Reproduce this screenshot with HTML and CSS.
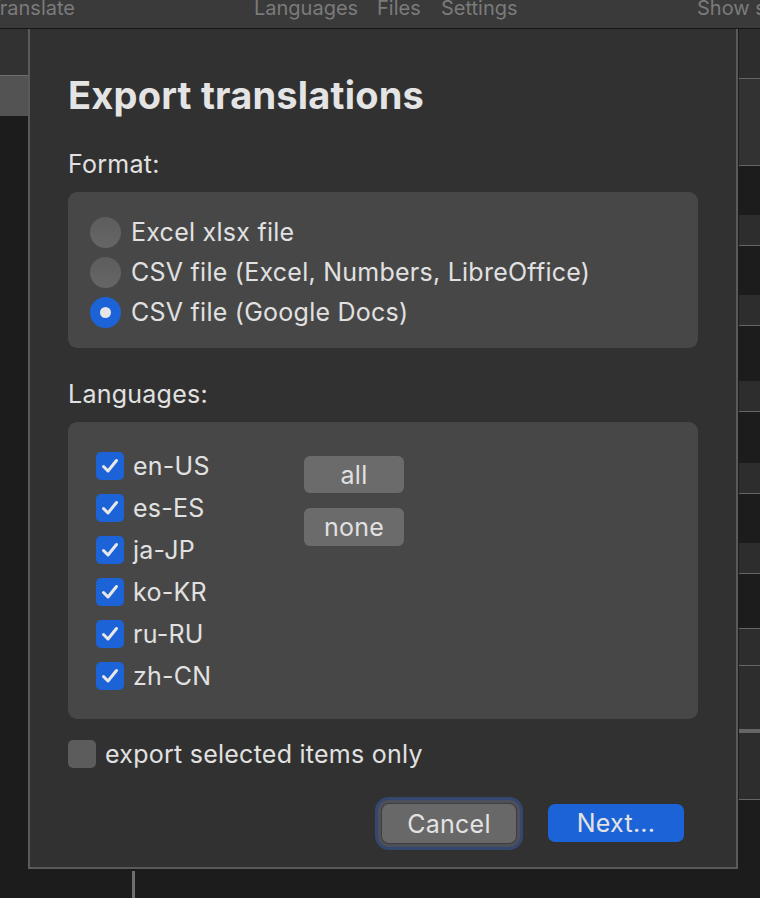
FILE: index.html
```html
<!DOCTYPE html>
<html>
<head>
<meta charset="utf-8">
<link rel="stylesheet" href="styles.css">
</head>
<body>
<div class="topbar">
  <span class="tb-item tb-first">Translate</span>
  <span class="tb-item tb-lang">Languages</span>
  <span class="tb-item tb-files">Files</span>
  <span class="tb-item tb-settings">Settings</span>
  <span class="tb-item tb-show">Show sidebar</span>
</div>
<div class="main">
  <div class="side-left">
    <div class="sl-a"></div>
    <div class="sl-b"></div>
  </div>
  <div class="dialog">
    <h1 class="title">Export translations</h1>
    <div class="label">Format:</div>
    <div class="group radios">
      <div class="radio-row"><span class="radio"></span><span class="opt">Excel xlsx file</span></div>
      <div class="radio-row"><span class="radio"></span><span class="opt">CSV file (Excel, Numbers, LibreOffice)</span></div>
      <div class="radio-row"><span class="radio on"><span class="radio-dot"></span></span><span class="opt">CSV file (Google Docs)</span></div>
    </div>
    <div class="label label-lang">Languages:</div>
    <div class="group langs">
      <div class="lang-list">
        <div class="check-row"><span class="check on"><svg viewBox="0 0 28 28"><path d="M7.5 14.5 L12 19 L20.5 8.5"/></svg></span><span class="opt">en-US</span></div>
        <div class="check-row"><span class="check on"><svg viewBox="0 0 28 28"><path d="M7.5 14.5 L12 19 L20.5 8.5"/></svg></span><span class="opt">es-ES</span></div>
        <div class="check-row"><span class="check on"><svg viewBox="0 0 28 28"><path d="M7.5 14.5 L12 19 L20.5 8.5"/></svg></span><span class="opt">ja-JP</span></div>
        <div class="check-row"><span class="check on"><svg viewBox="0 0 28 28"><path d="M7.5 14.5 L12 19 L20.5 8.5"/></svg></span><span class="opt">ko-KR</span></div>
        <div class="check-row"><span class="check on"><svg viewBox="0 0 28 28"><path d="M7.5 14.5 L12 19 L20.5 8.5"/></svg></span><span class="opt">ru-RU</span></div>
        <div class="check-row"><span class="check on"><svg viewBox="0 0 28 28"><path d="M7.5 14.5 L12 19 L20.5 8.5"/></svg></span><span class="opt">zh-CN</span></div>
      </div>
      <div class="lang-buttons">
        <button class="small-btn">all</button>
        <button class="small-btn tall">none</button>
      </div>
    </div>
    <div class="check-row export"><span class="check off"></span><span class="opt">export selected items only</span></div>
    <div class="actions">
      <button class="btn cancel">Cancel</button>
      <button class="btn next">Next...</button>
    </div>
  </div>
  <div class="side-right">
    <div class="rs rs-dot r1"></div>
    <div class="rs rs-dot2 r2"></div>
    <div class="rs rs-dark r3"></div>
    <div class="rs rs-dot r4"></div>
    <div class="rs rs-dark r3"></div>
    <div class="rs rs-dot r4"></div>
    <div class="rs rs-dark r5"></div>
    <div class="rs rs-dot r4"></div>
    <div class="rs rs-dark r6"></div>
    <div class="rs rs-dot r4"></div>
    <div class="rs rs-dark r3"></div>
    <div class="rs rs-dot r4"></div>
    <div class="rs rs-dark r5 topline"></div>
    <div class="rs rs-dot r7"></div>
    <div class="rs rs-dot r8 thick"></div>
    <div class="rs rs-dot r8"></div>
  </div>
</div>
<div class="bottom"><div class="vline"></div></div>
</body>
</html>
```
FILE: styles.css
```css
* { box-sizing: border-box; }
html, body { margin: 0; padding: 0; }
body {
  width: 760px;
  height: 898px;
  overflow: hidden;
  background: #1c1c1c;
  font-family: Inter, "Noto Sans", sans-serif;
  color: #e1e1e1;
}

.topbar {
  height: 29px;
  background: #3a3a3a;
  border-bottom: 1px solid #161616;
  display: flex;
  align-items: flex-start;
  overflow: hidden;
  white-space: nowrap;
  color: #7b7b7b;
  font-size: 20px;
  line-height: 17px;
}
.tb-item { flex: none; }
.tb-first { margin-left: -12px; width: 266px; }
.tb-lang { width: 123px; }
.tb-files { width: 64px; }
.tb-settings { width: 256px; }
.tb-show { width: 100px; }

.main {
  display: flex;
  height: 840px;
}

.side-left {
  width: 28px;
  flex: none;
  display: flex;
  flex-direction: column;
}
.sl-a { height: 47px; background: #323232; border-bottom: 1px solid #6e6e6e; }
.sl-b { height: 40px; background: #535353; }

.dialog {
  width: 710px;
  flex: none;
  background: #313131;
  border-left: 2px solid #5a5a5a;
  border-right: 2px solid #5a5a5a;
  border-bottom: 2px solid #5a5a5a;
  padding: 44px 38px 0 38px;
  display: flex;
  flex-direction: column;
}

.title {
  margin: 0;
  font-size: 38px;
  font-weight: 700;
  line-height: 44px;
  color: #e4e4e4;
  letter-spacing: 0.2px;
}

.label {
  margin-top: 32px;
  font-size: 25px;
  line-height: 30px;
  letter-spacing: 0.25px;
}
.label-lang { margin-top: 31px; }

.group {
  margin-top: 13px;
  background: #474747;
  border-radius: 9px;
}

.radios {
  height: 156px;
  padding: 20px 22px 16px;
}
.radio-row {
  height: 40px;
  display: flex;
  align-items: center;
  gap: 10px;
}
.radio {
  width: 31px;
  height: 31px;
  border-radius: 50%;
  background: linear-gradient(#5d5d5d, #666666);
  flex: none;
  display: flex;
  align-items: center;
  justify-content: center;
}
.radio.on { background: #1d63d8; }
.radio-dot {
  width: 11px;
  height: 11px;
  border-radius: 50%;
  background: #e6e6e6;
}
.opt {
  font-size: 25px;
  line-height: 30px;
  white-space: nowrap;
  letter-spacing: 0.25px;
}

.langs {
  height: 297px;
  padding: 23px 28px 22px;
  display: flex;
}
.lang-list { width: 208px; flex: none; }
.check-row {
  height: 42px;
  display: flex;
  align-items: center;
  gap: 9px;
}
.check {
  width: 28px;
  height: 28px;
  border-radius: 5px;
  flex: none;
  display: flex;
}
.check.on { background: #1d63d8; }
.check.off { background: #5c5c5c; }
.check svg { width: 28px; height: 28px; }
.check path {
  fill: none;
  stroke: #e8e8e8;
  stroke-width: 3;
  stroke-linecap: round;
  stroke-linejoin: round;
}

.lang-buttons {
  margin-top: 11px;
  display: flex;
  flex-direction: column;
  gap: 15px;
}
.small-btn {
  width: 100px;
  height: 37px;
  border: none;
  border-radius: 6px;
  background: #6b6b6b;
  color: #e1e1e1;
  font-family: inherit;
  font-size: 25px;
  line-height: 30px;
  padding: 0;
  letter-spacing: 0.25px;
}
.small-btn.tall { height: 38px; }

.export {
  margin-top: 21px;
  height: 28px;
}

.actions {
  margin-top: 36px;
  margin-right: 14px;
  display: flex;
  justify-content: flex-end;
  align-items: flex-start;
  gap: 32px;
}
.btn {
  border: none;
  padding: 0;
  font-family: inherit;
  font-size: 25px;
  line-height: 30px;
  color: #e3e3e3;
  border-radius: 7px;
  letter-spacing: 0.25px;
}
.cancel {
  width: 134px;
  height: 39px;
  background: #686868;
  box-shadow: 0 0 0 1px #3e3e3e, 0 0 0 4px #4d5058, 0 0 0 7px #34476e;
}
.next {
  width: 136px;
  height: 38px;
  background: #1d63d8;
}

.side-right {
  width: 22px;
  flex: none;
  display: flex;
  flex-direction: column;
  border-left: 1px solid #1c1c1c;
}
.rs { flex: none; }
.rs-dot { background: #2d2d2d; border-bottom: 1px solid #666; }
.rs-dot2 { background: #323232; border-bottom: 1px solid #666; }
.rs-dark { background: #1c1c1c; }
.r1 { height: 50px; }
.r2 { height: 87px; }
.r3 { height: 49px; }
.r4 { height: 31px; }
.r5 { height: 55px; }
.r6 { height: 51px; }
.r7 { height: 37px; }
.r8 { height: 67px; }
.topline { border-bottom: 1px solid #666; }
.thick { border-bottom: 4px solid #666; }

.bottom {
  height: 29px;
  padding-left: 132px;
  padding-top: 2px;
}
.vline {
  width: 3px;
  height: 27px;
  background: #6e6e6e;
}
```
